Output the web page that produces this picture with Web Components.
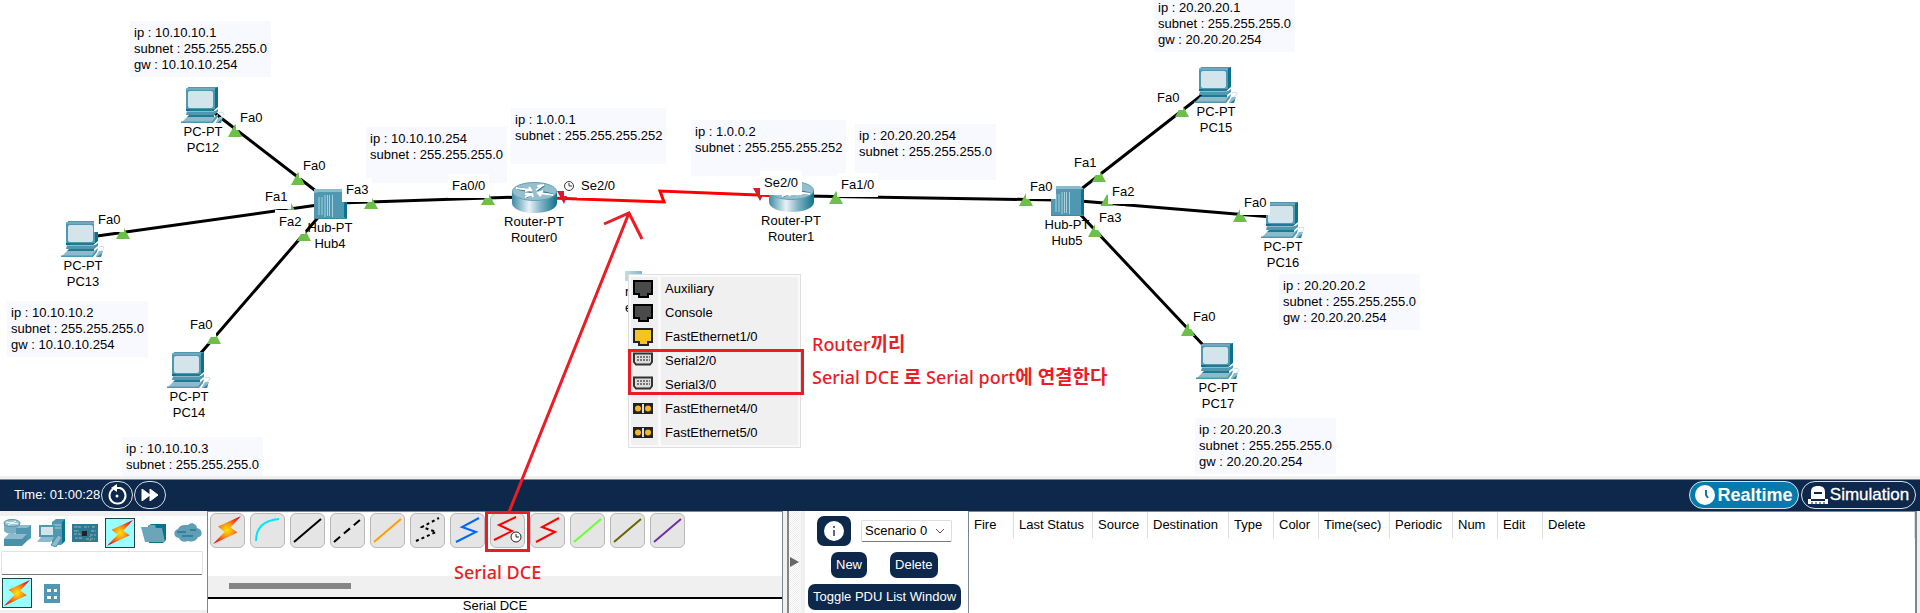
<!DOCTYPE html>
<html lang="ko">
<head>
<meta charset="utf-8">
<title>Packet Tracer</title>
<style>
html,body{margin:0;height:100%}
body{font:13px/16px "Liberation Sans",Arial,sans-serif;color:#000;background:#f0f0f0}
</style>
</head>
<body>
<pt-app></pt-app>

<script>
const define = (name, html, after) => {
  const tpl = document.createElement('template');
  tpl.innerHTML = html;
  customElements.define(name, class extends HTMLElement {
    connectedCallback() {
      if (this.shadowRoot) return;
      this.attachShadow({mode: 'open'}).append(tpl.content.cloneNode(true));
      if (after) after(this, this.shadowRoot);
    }
  });
};
const place = el => {
  el.style.left = el.getAttribute('x') + 'px';
  el.style.top = el.getAttribute('y') + 'px';
};

/* ---------- artwork ---------- */
const BOLT = `<defs><radialGradient id="b" gradientUnits="userSpaceOnUse" cx="17" cy="17" r="17">
<stop offset="0" stop-color="#ffe800"/><stop offset=".35" stop-color="#ff9c10"/><stop offset=".75" stop-color="#f4361c"/><stop offset="1" stop-color="#e5001c"/></radialGradient></defs>
<path d="M31 3 8 13.500 14.500 19 3 31 27.500 19.500 20.500 14.500Z" fill="url(#b)"/>`;

const ART = {
  pc: {w: 44, h: 36, svg: `
    <path d="M5 2 8 0H37V20L32 24H5Z" fill="#0a728c"/><path d="M5 2 8 0H37L33 2Z" fill="#4f98b0"/>
    <rect x="5" y="2" width="29" height="20" fill="#4f98b0"/><path d="M5 2H34" stroke="#8ebbcb"/>
    <rect x="7" y="4" width="25" height="17" rx="2" fill="#d3e5eb"/>
    <path d="M10 22H34L32 24H8Z" fill="#1f7a94"/><path d="M6 24H34L37 22V25L33 28H5Z" fill="#4f98b0"/><path d="M6 24.500H33" stroke="#8ebbcb"/>
    <path d="M8 28H33V30H6Z" fill="#1f7a94"/><path d="M6 30H33L37 27V29L31 36H0Z" fill="#8ebbcb"/><path d="M0 34.500H31L36 28V31L32 36H0Z" fill="#4f98b0"/>
    <path d="M38 26C43 24 45 27 40 30" fill="none" stroke="#c3dce5"/><path d="M35 35 38 30H42L40 36H35Z" fill="#8ebbcb"/><path d="M36 36 41 32 40 36Z" fill="#2c84a0"/>`},
  hub: {w: 33, h: 30, svg: `
    <path d="M0 0H27L33 4V30H0Z" fill="#5098b1"/><path d="M0 0H29L33 3H5L0 4Z" fill="#8ebbcb"/>
    <path d="M30 4 33 2V30L30 28Z" fill="#0a728c"/><path d="M5 8V26M8 8V26M11 6V28M13.500 6V27M15.500 6V27M18.500 6V28" stroke="#a9cfdb"/><path d="M0 29.500H33" stroke="#3c89a4"/>`},
  router: {w: 45, h: 31, svg: `
    <defs><linearGradient id="r"><stop offset="0" stop-color="#3c8ca5"/><stop offset=".38" stop-color="#e9f2f6"/><stop offset=".65" stop-color="#7fb2c3"/><stop offset="1" stop-color="#10738c"/></linearGradient></defs>
    <path d="M0 9V21C0 27 10 31 22.500 31S45 27 45 21V9Z" fill="url(#r)"/>
    <ellipse cx="22.500" cy="9.500" rx="22" ry="9" fill="#96bfcd" stroke="#5da0b6"/>
    <g fill="none" stroke="#2f7d95" stroke-width="3"><path d="M5 6 18 9M41 13 28 10M32 3 25 8M14 15 20 11"/></g>
    <g fill="none" stroke="#fff" stroke-width="2"><path d="M4 6 18 8M13 9 19 8 17 5M41 13 27 11M31 9 26 11 29 14M31 3 24 8M25 4 32 3M13 15 20 12M13 12 20 12 21 15"/></g>`}
};
const TOOL = {
  bolt: BOLT,
  console: '<path d="M6 28Q6 8 29 6" stroke="#00e5ff"/>',
  straight: '<path d="M4 29 31 6" stroke="#000"/>',
  cross: '<path d="M4 29 31 6" stroke="#000" stroke-dasharray="8 5"/>',
  fiber: '<path d="M4 29 31 6" stroke="#ff9c00"/>',
  phone: '<path d="M6 28 26 19 12 14 29 5" stroke="#000" stroke-dasharray="3 3"/>',
  coaxial: '<path d="M6 29 26 19 12 14 29 5" stroke="#0066ff"/>',
  dce: '<path d="M4 27 22 18 9 12 26 4" stroke="red"/><circle cx="26" cy="24" r="5" fill="#fff" stroke="#222" stroke-width="1"/><path d="M26 21V24H29" stroke="#222" stroke-width="1"/>',
  dte: '<path d="M6 29 25 19 12 14 29 5" stroke="red"/>',
  octal: '<path d="M4 29 31 6" stroke="#6cff2e"/>',
  iot: '<path d="M4 29 31 6" stroke="#6b6200"/>',
  usb: '<path d="M4 29 31 6" stroke="#6f2fa0"/>'
};
const PORT = {
  dark: '<path d="M1 1H19V14H15V17H6V14H1Z" fill="#4a4a4a" stroke="#000" stroke-width="2"/>',
  gold: '<path d="M1 1H19V14H15V17H6V14H1Z" fill="#f7c41d" stroke="#222" stroke-width="2"/>',
  serial: '<path d="M1 1.500H19V10L17 12.500H3L1 10Z" fill="#ddd" stroke="#333" stroke-width="2"/><path d="M4 5H17M4 8H17" stroke="#777" stroke-width="2" stroke-dasharray="2 1"/>',
  fiber: '<rect y="3" width="20" height="11" fill="#222"/><rect x="9" y="4" width="2" height="9" fill="#ddd"/><circle cx="5" cy="8.500" r="3" fill="#f7b81d"/><circle cx="15" cy="8.500" r="3" fill="#f7b81d"/>'
};

/* ---------- canvas items ---------- */
define('pt-note', `<style>
:host{position:absolute;box-sizing:border-box;min-height:56px;padding:4px;background:#f8f8ff;white-space:pre}
</style><slot></slot>`, place);

define('pt-label', `<style>
:host{position:absolute;padding:0 4px;line-height:24px;background:#fff;white-space:nowrap}
</style><slot></slot>`, place);

define('pt-device', `<style>
:host{position:absolute;display:flex;flex-direction:column;align-items:center;gap:1px;width:60px;text-align:center;white-space:nowrap}
svg{display:block}
</style><div id="art"></div><div><slot></slot></div>`, (el, root) => {
  place(el);
  const a = ART[el.getAttribute('kind')];
  root.getElementById('art').innerHTML = `<svg width="${a.w}" height="${a.h}" viewBox="0 0 ${a.w} ${a.h}">${a.svg}</svg>`;
});

define('pt-port', `<style>
:host{display:block}
button{display:flex;align-items:center;width:100%;height:24px;padding:0 0 0 2px;border:0;background:none;font:inherit;text-align:left}
svg{flex:none;margin-right:12px}
</style><button role="menuitem"><svg width="20" height="18" viewBox="0 0 20 18"></svg><slot></slot></button>`, (el, root) => {
  root.querySelector('svg').innerHTML = PORT[el.getAttribute('kind')];
});

define('pt-port-menu', `<style>
:host{position:absolute;box-sizing:border-box;width:173px;border:1px solid #dedede;background:#fafafa;padding:2px}
nav{background:linear-gradient(90deg,#f0f0f0 27px,#fafafa 27px,#fafafa 30px,#f0f0f0 30px)}
.mark{position:absolute;left:-1px;top:74px;width:170px;height:40px;border:3px solid #ed1c24;pointer-events:none}
</style><nav role="menu"><slot></slot></nav><div class="mark"></div>`, place);

define('pt-remark', `<style>
:host{position:absolute;color:#ed1c24;font:500 18px/24px "Noto Sans","Noto Sans CJK KR",sans-serif;white-space:nowrap}
::slotted(b){font-size:19px;line-height:1}
</style><slot></slot>`, place);

define('pt-workspace', `<style>
:host{display:block;flex:1;position:relative;min-height:476px;background:#fff}
.clip{position:absolute;inset:0;overflow:hidden}
.wires,.lights,.arrow{position:absolute;left:0;top:0;overflow:visible}
.arrow{pointer-events:none;z-index:2}
.ghost{position:absolute;left:625px;top:271px;width:17px;height:10px;background:linear-gradient(90deg,#c4dde6,#86b6c6)}
.ghosttext{position:absolute;left:625px;top:284px}
</style>
<div class="clip">
<pt-note x="130" y="21">ip : 10.10.10.1
subnet : 255.255.255.0
gw : 10.10.10.254</pt-note>
<pt-note x="7" y="301">ip : 10.10.10.2
subnet : 255.255.255.0
gw : 10.10.10.254</pt-note>
<pt-note x="122" y="437">ip : 10.10.10.3
subnet : 255.255.255.0</pt-note>
<pt-note x="366" y="127">ip : 10.10.10.254
subnet : 255.255.255.0</pt-note>
<pt-note x="511" y="108">ip : 1.0.0.1
subnet : 255.255.255.252</pt-note>
<pt-note x="691" y="120">ip : 1.0.0.2
subnet : 255.255.255.252</pt-note>
<pt-note x="855" y="124">ip : 20.20.20.254
subnet : 255.255.255.0</pt-note>
<pt-note x="1154" y="-4">ip : 20.20.20.1
subnet : 255.255.255.0
gw : 20.20.20.254</pt-note>
<pt-note x="1279" y="274">ip : 20.20.20.2
subnet : 255.255.255.0
gw : 20.20.20.254</pt-note>
<pt-note x="1195" y="418">ip : 20.20.20.3
subnet : 255.255.255.0
gw : 20.20.20.254</pt-note>
<svg class="wires" width="1" height="1" fill="none" stroke="#000" stroke-width="3">
<path d="M212 111 325 198M90 237 325 204M200 354 322 213M340 203 520 197M805 196 1056 200M1080 190 1202 95M1080 201 1272 217M1078 212 1204 346"/>
<path d="M550 198 664 202 660 191 780 196" stroke="red"/>
</svg>
<pt-device kind="pc" x="173" y="87">PC-PT<br>PC12</pt-device>
<pt-device kind="pc" x="53" y="221">PC-PT<br>PC13</pt-device>
<pt-device kind="pc" x="159" y="352">PC-PT<br>PC14</pt-device>
<pt-device kind="pc" x="1186" y="67">PC-PT<br>PC15</pt-device>
<pt-device kind="pc" x="1253" y="202">PC-PT<br>PC16</pt-device>
<pt-device kind="pc" x="1188" y="343">PC-PT<br>PC17</pt-device>
<pt-device kind="hub" x="300" y="189">Hub-PT<br>Hub4</pt-device>
<pt-device kind="hub" x="1037" y="186">Hub-PT<br>Hub5</pt-device>
<pt-device kind="router" x="504" y="182">Router-PT<br>Router0</pt-device>
<pt-device kind="router" x="761" y="181">Router-PT<br>Router1</pt-device>
<svg class="lights" width="1" height="1"></svg>
<pt-label x="236" y="106">Fa0</pt-label>
<pt-label x="299" y="154">Fa0</pt-label>
<pt-label x="261" y="185">Fa1</pt-label>
<pt-label x="275" y="210">Fa2</pt-label>
<pt-label x="342" y="178">Fa3</pt-label>
<pt-label x="94" y="208">Fa0</pt-label>
<pt-label x="186" y="313">Fa0</pt-label>
<pt-label x="448" y="174">Fa0/0</pt-label>
<pt-label x="577" y="174">Se2/0</pt-label>
<pt-label x="760" y="171">Se2/0</pt-label>
<pt-label x="837" y="173">Fa1/0</pt-label>
<pt-label x="1026" y="175">Fa0</pt-label>
<pt-label x="1070" y="151">Fa1</pt-label>
<pt-label x="1108" y="180">Fa2</pt-label>
<pt-label x="1095" y="206">Fa3</pt-label>
<pt-label x="1153" y="86">Fa0</pt-label>
<pt-label x="1240" y="191">Fa0</pt-label>
<pt-label x="1189" y="305">Fa0</pt-label>
<div class="ghost"></div><div class="ghosttext">r<br>e</div>
<pt-port-menu x="628" y="274">
<pt-port kind="dark">Auxiliary</pt-port><pt-port kind="dark">Console</pt-port><pt-port kind="gold">FastEthernet1/0</pt-port>
<pt-port kind="serial">Serial2/0</pt-port><pt-port kind="serial">Serial3/0</pt-port>
<pt-port kind="fiber">FastEthernet4/0</pt-port><pt-port kind="fiber">FastEthernet5/0</pt-port>
</pt-port-menu>
<pt-remark x="812" y="332">Router<b>끼리</b></pt-remark>
<pt-remark x="812" y="365">Serial DCE <b>로</b> Serial port<b>에 연결한다</b></pt-remark>
</div>
<svg class="arrow" width="1" height="1" fill="none" stroke="#ed1c24" stroke-width="3"><path d="M509 512 629 213M604 224 629 213 642 239"/></svg>`,
(el, root) => {
  const up = [[235,137],[298,185],[291,216],[123,239],[304,241],[371,209],[214,344],[488,205],[836,204],[1026,206],[1099,182],[1107,207],[1095,237],[1182,117],[1240,222],[1188,336]];
  root.querySelector('.lights').innerHTML =
    up.map(([x, y]) => `<path fill="#6cc04a" d="M${x} ${y - 13} ${x + 7} ${y}H${x - 7}Z"/>`).join('') +
    `<path fill="#d0202e" d="M557 191H564V196H567L564 204ZM753 188H767L760 201Z"/>
     <circle cx="569" cy="186" r="4.500" fill="#fff" stroke="#333"/><path d="M569 183V186H572" fill="none" stroke="#333"/>`;
});

/* ---------- time bar ---------- */
define('pt-timebar', `<style>
:host{display:flex;align-items:center;box-sizing:border-box;height:35px;padding:1px 3px 1px 14px;background:#0e284b;color:#fff;border-top:3px solid #f0f0f0;box-shadow:inset 0 1px #858585}
button{display:flex;align-items:center;justify-content:center;box-sizing:border-box;height:28px;width:32px;margin:0 1px 0 0;padding:0;border:1px solid #d8e0ea;border-radius:14px;background:none;color:#fff;font:inherit}
.time{margin-right:1px}
.grow{flex:1}
.mode{width:115px;gap:2px;font-size:17px;-webkit-text-stroke:.3px #fff}
.real{width:110px;background:#047bac;font-size:18px;font-weight:bold;margin-right:2px;-webkit-text-stroke:0}
</style>
<span class="time">Time: 01:00:28</span>
<button aria-label="Power cycle devices"><svg width="22" height="22" viewBox="0 0 22 22"><path d="M7 5A8 8 0 1 0 14 4H9" fill="none" stroke="#fff" stroke-width="2"/><path d="M11 0V8L5 4Z" fill="#fff"/><circle cx="11" cy="12" r="1.500" fill="#fff"/></svg></button>
<button aria-label="Fast forward time"><svg width="18" height="12" viewBox="0 0 18 12"><path d="M1 0 9 6V0L17 6 9 12V6L1 12Z" fill="#fff" stroke="#fff"/></svg></button>
<span class="grow"></span>
<button class="mode real"><svg width="20" height="20" viewBox="0 0 20 20"><circle cx="10" cy="10" r="10" fill="#fff"/><path d="M11 5V10L13 13" fill="none" stroke="#047bac" stroke-width="2"/></svg>Realtime</button>
<button class="mode"><svg width="20" height="18" viewBox="0 0 20 18"><path d="M3 13V6C3 2 5 0 10 0S17 2 17 6V13H20V18H0V13Z" fill="#fff"/><path d="M6 7H14M3 14H17" stroke="#0e284b" stroke-width="2"/><path d="M4 16V18M8 16V18M12 16V18M16 16V18" stroke="#0e284b"/></svg>Simulation</button>`);

/* ---------- device picker ---------- */
define('pt-devices', `<style>
:host{display:flex;flex-direction:column;box-sizing:border-box;padding:5px 0 3px;min-height:102px}
.body{flex:1;background:#fff;padding:2px 4px 0 1px}
.row{display:flex;gap:4px;padding-left:1px}
button{box-sizing:border-box;width:30px;height:30px;padding:0;border:0;background:none;display:flex;align-items:center;justify-content:center}
.on{background:#9ff;border:1px solid #244}
input{display:block;box-sizing:border-box;width:100%;height:24px;margin:3px 0;border:1px solid #e2e2e2;border-bottom-color:#777;border-radius:2px;background:#fff;font:inherit}
.top{justify-content:space-between;padding-right:0}
.two{gap:12px}
</style>
<div class="body">
<div class="row top">
<button aria-label="Network Devices"><svg width="28" height="28" viewBox="0 0 28 28"><path d="M1 3V12C4 16 14 16 17 12V3Z" fill="#7bafc1"/><ellipse cx="9" cy="4" rx="8" ry="3.500" fill="#9cc4d1" stroke="#5098b1"/><path d="M3 3 15 5M13 2 5 6" stroke="#fff"/><path d="M13 9 17 6H28V19L24 22H13Z" fill="#5098b1"/><path d="M13 9 17 6H28L24 9Z" fill="#8ebbcb"/><path d="M1 20 6 15H24V22L19 27H1Z" fill="#4a90a9"/><path d="M1 20 6 15H24L19 20Z" fill="#8ebbcb"/></svg></button>
<button aria-label="End Devices"><svg width="28" height="28" viewBox="0 0 28 28"><path d="M15 3 19 0H28V22L24 26H15Z" fill="#5098b1"/><path d="M25 3 28 0V22L25 25Z" fill="#0a728c"/><path d="M16 6H24M16 9H24" stroke="#a9cfdb"/><rect x="3" y="7" width="14" height="10" fill="#d3e5eb" stroke="#5098b1" stroke-width="2"/><path d="M4 18H17L14 23H0Z" fill="#8ebbcb"/><path d="M14 26 21 16 25 18 19 28Z" fill="#8ebbcb" stroke="#4a90a9"/></svg></button>
<button aria-label="Components"><svg width="26" height="18" viewBox="0 0 26 18"><rect width="26" height="18" fill="#2f7893"/><rect x="10" y="7" width="5" height="5" fill="#222"/><path d="M2 3H9M12 3H17M2 7H7M2 10H8M3 14H11M14 15H23M19 7H24M18 11H24M20 3H24" stroke="#7fb5c8" stroke-dasharray="3 1"/><path d="M5 2V8M21 2V9M18 12V17M8 10V17" stroke="#c2a878" stroke-dasharray="1 3"/></svg></button>
<button class="on" aria-label="Connections"><svg width="30" height="30" viewBox="2 2 30 30">${BOLT}</svg></button>
<button aria-label="Miscellaneous"><svg width="26" height="20" viewBox="0 0 26 20"><path d="M7 3 10 1H25V17L22 20H8Z" fill="#0a728c"/><path d="M0 4H7L9 2H14L15 5H21L24 19H4Z" fill="#6aa5b9"/></svg></button>
<button aria-label="Multiuser Connection"><svg width="28" height="20" viewBox="0 0 28 20"><path d="M5 15C-1 15-1 7 4 6 6 1 12 2 14 2 18-2 23 2 23 5 29 6 29 14 24 14 22 19 17 19 14 18 10 20 6 18 5 15Z" fill="#5f9fb6"/><path d="M3 9H12M16 7H22M8 13H19" stroke="#35809a" stroke-width="2"/></svg></button>
</div>
<input type="text" aria-label="Search devices">
<div class="row two">
<button class="on" aria-label="Connections"><svg width="30" height="30" viewBox="2 2 30 30">${BOLT}</svg></button>
<button aria-label="Structured Cabling" style="width:16px"><svg width="16" height="19" viewBox="0 0 16 19"><rect width="16" height="19" fill="#5098b1"/><path d="M3 5H7V8H3ZM10 5H13V8H10ZM3 12H7V15H3ZM10 12H13V15H10Z" fill="#fff"/></svg></button>
</div></div>`);

/* ---------- cable tools ---------- */
define('pt-cable', `<style>
:host{display:block;position:relative;width:35px;height:35px}
button{display:block;box-sizing:border-box;width:35px;height:35px;padding:0;border:1px solid #b9b9b9;border-radius:6px;background:#e5e5e5}
svg{display:block;margin:-1px}
:host([marked])::after{content:"";position:absolute;left:-5px;top:-2px;width:39px;height:35px;border:3px solid #ed1c24}
</style><button><svg width="35" height="35" viewBox="0 0 35 35" fill="none" stroke-width="2"></svg></button>`, (el, root) => {
  const k = el.getAttribute('kind');
  root.querySelector('button').setAttribute('aria-label', k);
  root.querySelector('svg').innerHTML = TOOL[k];
});

define('pt-cables', `<style>
:host{display:flex;flex-direction:column;position:relative;box-sizing:border-box;border:1px solid #7d8590;border-bottom:0;background:#fff}
.tools{display:flex;gap:5px;padding:1px 2px 0;height:64px;box-sizing:border-box}
.scroll{height:21px;padding:7px 0 0 21px;box-sizing:border-box;background:#f0f0f0}
.scroll div{width:122px;height:6px;background:#858585}
.name{flex:1;text-align:center;border-top:2px solid #000;line-height:14px}
pt-remark{z-index:1}
</style>
<div class="tools">${Object.keys(TOOL).map(k => `<pt-cable kind="${k}"${k === 'dce' ? ' marked' : ''}></pt-cable>`).join('')}</div>
<div class="scroll"><div></div></div>
<div class="name">Serial DCE</div>
<pt-remark x="246" y="48">Serial DCE</pt-remark>`);

define('pt-splitter', `<style>
:host{display:flex;align-items:center;box-sizing:border-box;border-left:2px solid #858585;border-right:4px solid #f0f0f0;background:repeating-conic-gradient(#fff 0 25%,#ececec 0 50%) 0 0/2px 2px;margin-left:4px}
button{border:0;padding:0;margin:0 0 0 1px;background:none}svg{display:block}
</style><button aria-label="Collapse"><svg width="9" height="10" viewBox="0 0 9 10"><path d="M0 0 9 5 0 10Z" fill="#666"/></svg></button>`);

/* ---------- scenario ---------- */
define('pt-scenario', `<style>
:host{display:flex;flex-direction:column;gap:6px;background:#fff;padding:5px 7px 0 3px;box-sizing:border-box}
div{display:flex;align-items:center;justify-content:flex-start}
button{display:block;height:26px;border:0;border-radius:7px;padding:0 5px;background:#0e284b;color:#fff;font:inherit;white-space:nowrap}
.info{width:34px;height:30px;margin-left:9px;padding:0 7px}
svg{display:block}
select{appearance:none;box-sizing:border-box;width:91px;height:22px;margin-left:10px;padding:0 3px;border:1px solid #ddd;border-bottom-color:#777;border-radius:2px;color:#000;font:inherit;background:#fff url('data:image/svg+xml,<svg xmlns="http://www.w3.org/2000/svg" width="10" height="6"><path d="M1 1 5 5 9 1" fill="none" stroke="%23555"/></svg>') no-repeat right 6px center}
.n{margin-left:23px}.d{margin-left:23px}
.t{width:153px}
</style>
<div><button class="info" aria-label="Information"><svg width="20" height="20" viewBox="0 0 20 20"><circle cx="10" cy="10" r="10" fill="#fff"/><path d="M10 5V7M10 9V15" stroke="#5a6c8c" stroke-width="2"/></svg></button>
<select aria-label="Scenario"><option>Scenario 0</option></select></div>
<div><button class="n">New</button><button class="d">Delete</button></div>
<div><button class="t">Toggle PDU List Window</button></div>`);

const COLS = [['Fire',45],['Last Status',79],['Source',55],['Destination',81],['Type',45],['Color',45],['Time(sec)',71],['Periodic',63],['Num',45],['Edit',45],['Delete',0]];
define('pt-pdu-list', `<style>
:host{display:block;border:1px solid #7d8590;border-bottom:0;border-right-width:2px;background:#fff;margin:0 3px 0 0}
table{width:100%;border-collapse:separate;border-spacing:0;table-layout:fixed}
th{box-sizing:border-box;height:26px;padding:0 0 0 5px;border-right:1px solid #dedede;font-weight:normal;text-align:left;white-space:nowrap}
</style>
<table><colgroup>${COLS.map(c => `<col${c[1] ? ` style="width:${c[1]}px"` : ''}>`).join('')}</colgroup>
<thead><tr>${COLS.map(c => `<th scope="col">${c[0]}</th>`).join('')}</tr></thead></table>`);

define('pt-app', `<style>
:host{display:flex;flex-direction:column;min-height:100vh}
footer{display:grid;grid-template-columns:207px 576px 22px 163px minmax(0,1fr);min-height:102px}
</style>
<pt-workspace></pt-workspace>
<pt-timebar></pt-timebar>
<footer><pt-devices></pt-devices><pt-cables></pt-cables><pt-splitter></pt-splitter><pt-scenario></pt-scenario><pt-pdu-list></pt-pdu-list></footer>`);
</script>
</body>
</html>
